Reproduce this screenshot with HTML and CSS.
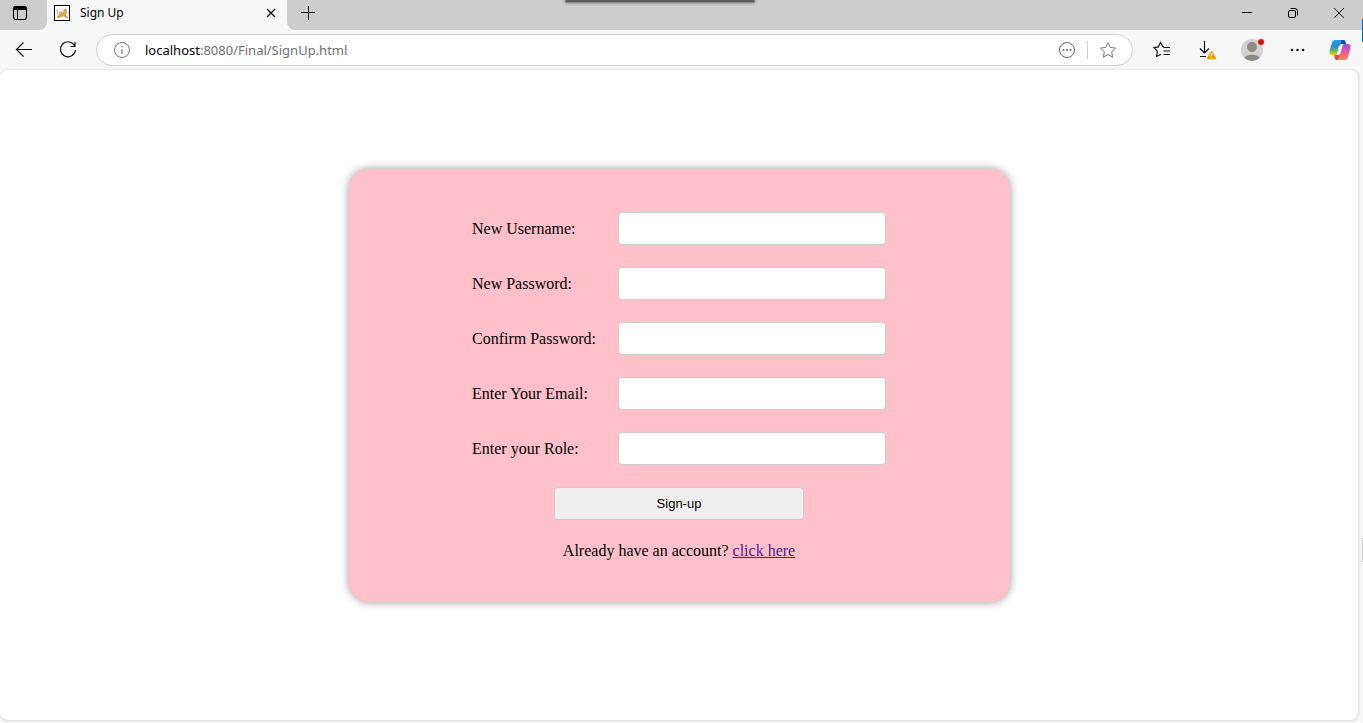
FILE: index.html
```html
<!DOCTYPE html>
<html lang="en">
<head>
<meta charset="utf-8">
<title>Sign Up</title>
<link rel="stylesheet" href="styles.css">
</head>
<body>
<div class="browser">
  <header class="tabstrip">
    <div class="strip-start">
      <button class="icon-btn" aria-label="Tab actions">
        <svg width="16" height="16" viewBox="0 0 16 16"><rect x="1.5" y="1.5" width="13" height="13" rx="2.5" fill="none" stroke="#111" stroke-width="1.2"/><path d="M1.500 4V4a2.500 2.500 0 0 1 2.500-2.500h8A2.500 2.500 0 0 1 14.500 4v.5h-13z" fill="#000" stroke="#000"/><path d="M5.500 5v9.500" stroke="#111"/></svg>
      </button>
    </div>
    <div class="tab">
      <svg width="16" height="16" viewBox="0 0 16 16"><rect x=".5" y=".5" width="15" height="15" fill="#fff" stroke="#000"/><path d="M2.500 12l2-2 .5-2 4-1 1-3 1 1h2l.5 3-1.500 1v2l2 2h-2l-2-1.500-3 .5-2 1z" fill="#dda94f"/><path d="M2 5l2 1-1 2 1 1M5 8l3-1.500M10 3.500l1 1.500 2-1.500M4 12l3-1M11 10l3 3" fill="none" stroke="#8b8270" stroke-width=".7"/></svg>
      <span class="tab-title">Sign Up</span>
      <button class="icon-btn" aria-label="Close tab">
        <svg width="10" height="10" viewBox="0 0 10 10"><path d="M1 1l8 8M9 1L1 9" stroke="#111" stroke-width="1.300"/></svg>
      </button>
    </div>
    <div class="strip-end">
      <button class="icon-btn" aria-label="New tab">
        <svg width="14" height="14" viewBox="0 0 14 14"><path d="M0 6.500h14M7.500 0v14" stroke="#111"/></svg>
      </button>
      <div class="window-buttons">
        <button class="icon-btn" aria-label="Minimize"><svg width="12" height="12" viewBox="0 0 12 12"><path d="M1 5.500h10" stroke="#000"/></svg></button>
        <button class="icon-btn" aria-label="Restore"><svg width="12" height="12" viewBox="0 0 12 12"><rect x="1.500" y="3.500" width="7" height="7" rx="1.500" fill="none" stroke="#000"/><path d="M3.500 1.500H8A2.500 2.500 0 0 1 10.500 4v4.500" fill="none" stroke="#000"/></svg></button>
        <button class="icon-btn" aria-label="Close"><svg width="12" height="12" viewBox="0 0 12 12"><path d="M1 1l10 10M11 1L1 11" stroke="#000"/></svg></button>
      </div>
    </div>
    <div class="top-shade"></div>
    <div class="edge-marker"></div>
  </header>

  <nav class="toolbar">
    <button class="icon-btn" aria-label="Back"><svg width="18" height="16" viewBox="0 0 18 16"><path d="M17 7.500H1.500M8.500 .5l-7 7 7 7" fill="none" stroke="#111" stroke-width="1.200"/></svg></button>
    <button class="icon-btn" aria-label="Refresh"><svg width="18" height="18" viewBox="0 0 18 18"><path d="M16 5.500A7.500 7.500 0 1 0 16.500 9M16 1v4.500h-4.500" fill="none" stroke="#111" stroke-width="1.200"/></svg></button>
    <div class="address">
      <svg width="18" height="18" viewBox="0 0 18 18"><circle cx="9" cy="9" r="7.500" fill="none" stroke="#777"/><path d="M9 8v5M9 5v1.300" stroke="#777" stroke-width="1.200"/></svg>
      <span class="url"><span class="host">localhost</span>:8080/Final/SignUp.html</span>
      <button class="icon-btn" aria-label="Site options"><svg width="18" height="18" viewBox="0 0 18 18"><circle cx="9" cy="9" r="7.500" fill="none" stroke="#666"/><g fill="#666"><circle cx="5.500" cy="9" r="1"/><circle cx="9" cy="9" r="1"/><circle cx="12.500" cy="9" r="1"/></g></svg></button>
      <span class="divider"></span>
      <button class="icon-btn" aria-label="Add to favorites"><svg width="18" height="18" viewBox="0 0 18 18"><path d="M9 1.500l2.300 4.900 5.200.7-3.800 3.700.9 5.400L9 13.600l-4.600 2.600.9-5.400L1.500 7.100l5.200-.7z" fill="none" stroke="#777" stroke-linejoin="round"/></svg></button>
    </div>
    <div class="actions">
      <button class="icon-btn" aria-label="Favorites"><svg width="18" height="18" viewBox="0 0 18 18"><path d="M11 5.800l-1-.1-2.500-4.200-2.200 4.400-4.300.8 3.300 3.500-.7 5.300 4.400-2.300M10.500 6.500H17M10.500 10H17M10.500 13.500H17" fill="none" stroke="#111" stroke-width="1.200"/></svg></button>
      <button class="icon-btn" aria-label="Downloads"><svg width="20" height="20" viewBox="0 0 20 20"><path d="M7.500 1v12M3 8.500l4.500 4.500L12 8.500M3 16.500h6" fill="none" stroke="#111" stroke-width="1.200"/><path d="M14.500 11.500l4 7h-8z" fill="#f59e0b" stroke="#f59e0b" stroke-width="1.500" stroke-linejoin="round"/><path d="M14.500 13v3M14.500 17v1" stroke="#fff" stroke-width="1.200"/></svg></button>
      <button class="icon-btn" aria-label="Profile"><svg width="24" height="24" viewBox="0 0 24 24"><circle cx="12" cy="12" r="11" fill="#d3d1ce"/><circle cx="12" cy="9" r="5" fill="#8d8985"/><path d="M4.500 20a8 5 0 0 1 15 0 11 11 0 0 1-15 0" fill="#8d8985"/><circle cx="21" cy="4" r="3" fill="#e60b12"/></svg></button>
      <button class="icon-btn" aria-label="Settings and more"><svg width="16" height="4" viewBox="0 0 16 4"><g fill="#111"><circle cx="3" cy="2" r="1.300"/><circle cx="8.500" cy="2" r="1.300"/><circle cx="14" cy="2" r="1.300"/></g></svg></button>
      <button class="icon-btn" aria-label="Copilot"><svg width="22" height="22" viewBox="0 0 22 22">
        <defs>
          <linearGradient id="cool" x1="0" y1="0" x2="0" y2="1"><stop offset="0" stop-color="#18a5ef"/><stop offset=".4" stop-color="#2387dd"/><stop offset=".7" stop-color="#5fb75a"/><stop offset="1" stop-color="#f3c80b"/></linearGradient>
          <linearGradient id="warm" x1="0" y1="0" x2="0" y2="1"><stop offset="0" stop-color="#9454e6"/><stop offset=".5" stop-color="#ea55a3"/><stop offset="1" stop-color="#ff8a4a"/></linearGradient>
        </defs>
        <path d="M6 1h8c2 0 2.500 2 3 4h-4c-2 0-2.500 2-3 4l-1.500 5c-.4 1.500-1 2-2.500 2H3c-3 0-3-3-2-6l2-6c.7-2 1.500-3 3-3z" fill="url(#cool)"/>
        <path d="M12 1h2c2 0 2.500 2 3 4h-5z" fill="#1749bd"/>
        <path d="M16 21H8c-2 0-2.500-2-2.500-5H9c2 0 2.500-2 3-4l1.500-5c.4-1.500 1-2 2.500-2h3c3 0 3 3 2 6l-2 7c-.7 2-1.500 3-3 3z" fill="url(#warm)"/>
        <path d="M5.500 16H9l1.500-.5L9 21H8c-2 0-2.500-2-2.500-5z" fill="#e34b3d"/>
        <path d="M10 7l3-.5-2 8-3 .5z" fill="#fff"/>
      </svg></button>
    </div>
  </nav>

  <main class="page">
    <form class="card">
      <div class="fields">
        <label for="username">New Username:</label><input id="username" type="text">
        <label for="password">New Password:</label><input id="password" type="password">
        <label for="confirm">Confirm Password:</label><input id="confirm" type="password">
        <label for="email">Enter Your Email:</label><input id="email" type="text">
        <label for="role">Enter your Role:</label><input id="role" type="text">
      </div>
      <button class="submit" type="button">Sign-up</button>
      <p class="login">Already have an account? <a href="#">click here</a></p>
    </form>
    <div class="side-handle"></div>
  </main>
</div>
</body>
</html>
```
FILE: styles.css
```css
* { box-sizing: border-box; }

body {
  margin: 0;
  background: #f7f7f7;
  font-family: "Liberation Serif", "Times New Roman", serif;
}

.browser {
  display: flex;
  flex-direction: column;
  min-height: 100vh;
}

.icon-btn {
  display: flex;
  align-items: center;
  justify-content: center;
  flex: none;
  padding: 0;
  border: 0;
  background: none;
}

svg { display: block; flex: none; }

.tabstrip {
  position: relative;
  display: flex;
  height: 30px;
  font-family: "Noto Sans", sans-serif;
}

.strip-start,
.strip-end {
  display: flex;
  align-items: center;
  padding-bottom: 4px;
  background: #cdcdcd;
}

.strip-start {
  width: 47px;
  padding-left: 12px;
  border-bottom-right-radius: 8px;
}

.strip-end {
  flex: 1;
  justify-content: space-between;
  padding-left: 14px;
  border-bottom-left-radius: 8px;
}

.tab {
  display: flex;
  align-items: center;
  gap: 10px;
  width: 240px;
  padding: 0 11px 4px 7px;
}

.tab-title {
  flex: 1;
  font-size: 12px;
  line-height: 16px;
}

.window-buttons { display: flex; padding-right: 1px; }
.window-buttons .icon-btn { width: 46px; height: 26px; }

.top-shade {
  position: absolute;
  top: 0;
  left: 566px;
  width: 188px;
  height: 2px;
  background: #5c5c5c;
  box-shadow: 0 0 3px 1px #666;
}

.edge-marker {
  position: absolute;
  top: 19px;
  right: 0;
  width: 1px;
  height: 23px;
  background: #0067b8;
}

.toolbar {
  display: flex;
  align-items: center;
  gap: 26px;
  height: 40px;
  padding: 0 3px 0 15px;
}

.address {
  display: flex;
  align-items: center;
  flex: 1;
  gap: 11px;
  height: 32px;
  margin-right: -20px;
  margin-left: -7px;
  padding: 0 15px 0 16px;
  border: 1px solid #cfcfcf;
  border-radius: 16px;
  background: #fff;
}

.url {
  flex: 1;
  padding-left: 3px;
  color: #707070;
  font: 13px/20px "Noto Sans", sans-serif;
}

.host { color: #000; }

.divider { width: 1px; height: 18px; background: #cfcfcf; }

.actions { display: flex; }
.actions .icon-btn { width: 45px; height: 32px; }
.actions .icon-btn:last-child { width: 41px; }

.page {
  position: relative;
  display: flex;
  flex: 1;
  align-items: flex-start;
  justify-content: center;
  margin: 0 4px 2px 0;
  padding: 99px 0;
  border: 1px solid #e2e2e2;
  border-width: 0 1px 1px 0;
  border-radius: 8px;
  background: #fff;
  box-shadow: 0 0 2px #ccc;
}

.card {
  display: flex;
  flex-direction: column;
  align-items: center;
  width: 661px;
  max-width: 100%;
  padding: 43px 40px 42px;
  border-radius: 20px;
  background: pink;
  box-shadow: 0 0 10px rgba(0, 0, 0, 0.4);
  font-size: 16px;
}

.fields {
  display: grid;
  grid-template-columns: 124px 268px;
  gap: 22px;
  align-items: center;
}

.fields label { white-space: nowrap; }

.fields input,
.submit {
  height: 33px;
  border: 1px solid #ccc;
  border-radius: 4px;
}

.fields input { width: 100%; padding: 8px; background: #fff; }

.submit {
  width: 250px;
  margin-top: 22px;
  background: #efefef;
  color: #000;
  font: 13px "Liberation Sans", Arial, sans-serif;
}

.login { margin: 22px 0 0; line-height: 18px; }
.login a { color: #551a8b; }

.side-handle {
  position: absolute;
  top: 468px;
  right: -5px;
  width: 1px;
  height: 24px;
  background: #ccc;
}
```
